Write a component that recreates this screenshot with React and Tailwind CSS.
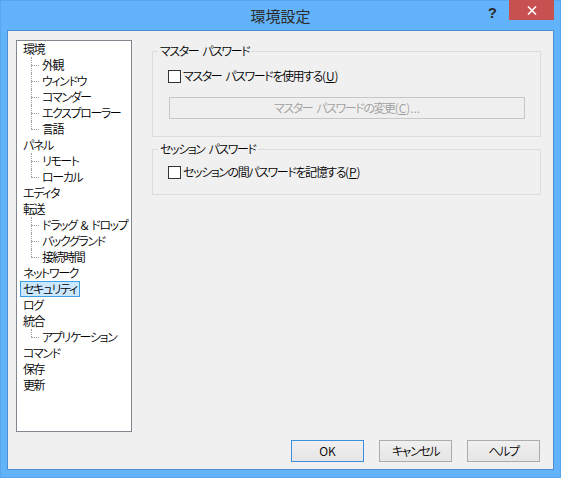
import React from "react";

const tree = [
  { t: "環境", c: ["外観", "ウィンドウ", "コマンダー", "エクスプローラー", "言語"] },
  { t: "パネル", c: ["リモート", "ローカル"] },
  { t: "エディタ" },
  { t: "転送", c: ["ドラッグ & ドロップ", "バックグランド", "接続時間"] },
  { t: "ネットワーク" },
  { t: "セキュリティ", sel: true },
  { t: "ログ" },
  { t: "統合", c: ["アプリケーション"] },
  { t: "コマンド" },
  { t: "保存" },
  { t: "更新" },
];

function T({ s }) {
  const parts = s.split(" ");
  return parts.map((p, i) => (
    <React.Fragment key={i}>
      {i > 0 && <span className="inline-block w-[4px]" />}
      {p}
    </React.Fragment>
  ));
}

function Label({ children, sel }) {
  return (
    <span
      className={
        "h-4 shrink-0 flex items-center px-[2px] border whitespace-nowrap " +
        (sel ? "bg-[#cce8ff] border-[#3d9fe0]" : "border-transparent")
      }
    >
      {children}
    </span>
  );
}

function ChildRow({ t, last }) {
  return (
    <div className="h-4 flex pl-[11px]">
      <div className="w-[8px] shrink-0 relative">
        <span
          className={
            "absolute left-0 top-0 border-l border-dotted border-[#a0a0a0] " +
            (last ? "h-[8px]" : "h-full")
          }
        />
        <span className="absolute left-0 top-[8px] w-full border-t border-dotted border-[#a0a0a0]" />
      </div>
      <Label>
        <T s={t} />
      </Label>
    </div>
  );
}

function Checkbox() {
  return <span className="w-[13px] h-[13px] border border-[#333333] bg-white shrink-0" />;
}

function Mn({ k }) {
  return (
    <span className="tracking-normal">
      (<span className="underline">{k}</span>)
    </span>
  );
}

function Btn({ children, def }) {
  return (
    <button
      className={
        "w-[73px] h-[22px] flex items-center justify-center border bg-gradient-to-b from-[#f0f0f0] to-[#e5e5e5] text-black " +
        (def ? "border-[#3c8fe0]" : "border-[#acacac]")
      }
    >
      {children}
    </button>
  );
}

export default function App() {
  return (
    <div
      className="w-[561px] h-[478px] bg-[#63b3fb] border border-[#5aa6ee] flex flex-col text-[12px] text-black font-[350] tracking-[-1.4px] [font-feature-settings:'palt'] leading-4"
      style={{ fontFamily: '"Noto Sans CJK JP", "Noto Sans", sans-serif' }}
    >
      <div className="h-[29px] grid grid-cols-[1fr_auto_1fr] shrink-0">
        <div />
        <div className="flex items-center justify-center text-[15px] text-[#2b2b2b] pt-[1px] tracking-normal font-normal">
          環境設定
        </div>
        <div className="flex justify-end items-start pr-[6px]">
          <span
            className="mt-[4px] mr-[12px] text-[15px] font-bold text-[#2b2b2b] leading-[16px] tracking-normal"
            style={{ fontFamily: '"Liberation Sans", sans-serif' }}
          >
            ?
          </span>
          <div className="w-[45px] h-[20px] bg-[#c75050] flex items-center justify-center -mt-[1px]">
            <svg width="10" height="9" viewBox="0 0 10 9">
              <path d="M1 0.5 L9 8.5 M9 0.5 L1 8.5" stroke="white" strokeWidth="1.6" />
            </svg>
          </div>
        </div>
      </div>
      <div className="mx-[6px] mb-[7px] flex-1 border border-[#4b8fd2] bg-[#f0f0f0] flex flex-col pt-[9px] pb-[7px]">
        <div className="flex">
          <div className="ml-[8px] w-[116px] h-[392px] border border-[#828790] bg-white pl-[3px] flex flex-col overflow-hidden">
            {tree.map((n) => (
              <React.Fragment key={n.t}>
                <div className="h-4 flex">
                  <Label sel={n.sel}>{n.t}</Label>
                </div>
                {n.c &&
                  n.c.map((c, i) => <ChildRow key={c} t={c} last={i === n.c.length - 1} />)}
              </React.Fragment>
            ))}
          </div>
          <div className="ml-[20px] w-[389px] flex flex-col pt-[3px]">
            <fieldset className="border border-[#dcdcdc] pb-[17px] flex flex-col">
              <legend className="ml-[5px] px-[2px] h-4">
                <T s="マスター パスワード" />
              </legend>
              <div className="mt-[9px] ml-[15px] h-4 flex items-center">
                <Checkbox />
                <span className="ml-[2px]">
                  <T s="マスター パスワードを使用する" />
                  <Mn k="U" />
                </span>
              </div>
              <div className="mt-[13px] ml-[16px] mr-[15px] h-[22px] border border-[#c6c6c6] bg-[#efefef] flex items-center justify-center text-[#a0a0a0]">
                <span>
                  <T s="マスター パスワードの変更" />
                  <Mn k="C" />
                  <span className="tracking-normal">...</span>
                </span>
              </div>
            </fieldset>
            <fieldset className="mt-[4px] border border-[#dcdcdc] pb-[14px] flex flex-col">
              <legend className="ml-[5px] px-[2px] h-4">
                <T s="セッション パスワード" />
              </legend>
              <div className="mt-[7px] ml-[15px] h-4 flex items-center">
                <Checkbox />
                <span className="ml-[2px]">
                  セッションの間パスワードを記憶する
                  <Mn k="P" />
                </span>
              </div>
            </fieldset>
          </div>
        </div>
        <div className="mt-[8px] flex justify-end gap-[15px] pr-[13px]">
          <Btn def>
            <span className="tracking-normal">OK</span>
          </Btn>
          <Btn>キャンセル</Btn>
          <Btn>ヘルプ</Btn>
        </div>
      </div>
    </div>
  );
}
